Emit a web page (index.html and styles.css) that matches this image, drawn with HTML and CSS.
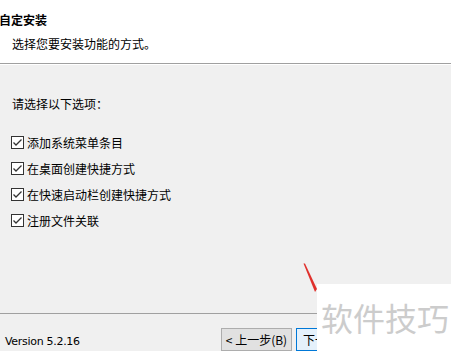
FILE: index.html
```html
<!DOCTYPE html>
<html lang="zh-CN">
<head>
  <meta charset="UTF-8">
  <title>自定安装</title>
  <link rel="stylesheet" href="styles.css">
</head>
<body>

  <div id="wizard">
    <div class="header">
      <div class="title">自定安装</div>
      <div class="subtitle">选择您要安装功能的方式。</div>
    </div>

    <div class="content">
      <div class="prompt">请选择以下选项：</div>
      <div class="options">
        <label class="option"><span class="box"><svg width="13" height="13" viewBox="0 0 13 13"><rect x="0.5" y="0.5" width="12" height="12" fill="#fff" stroke="#333"/><polyline points="2.5,6.5 5,9 10.5,3.5" fill="none" stroke="#333" stroke-width="1.3"/></svg></span>添加系统菜单条目</label>
        <label class="option"><span class="box"><svg width="13" height="13" viewBox="0 0 13 13"><rect x="0.5" y="0.5" width="12" height="12" fill="#fff" stroke="#333"/><polyline points="2.5,6.5 5,9 10.5,3.5" fill="none" stroke="#333" stroke-width="1.3"/></svg></span>在桌面创建快捷方式</label>
        <label class="option"><span class="box"><svg width="13" height="13" viewBox="0 0 13 13"><rect x="0.5" y="0.5" width="12" height="12" fill="#fff" stroke="#333"/><polyline points="2.5,6.5 5,9 10.5,3.5" fill="none" stroke="#333" stroke-width="1.3"/></svg></span>在快速启动栏创建快捷方式</label>
        <label class="option"><span class="box"><svg width="13" height="13" viewBox="0 0 13 13"><rect x="0.5" y="0.5" width="12" height="12" fill="#fff" stroke="#333"/><polyline points="2.5,6.5 5,9 10.5,3.5" fill="none" stroke="#333" stroke-width="1.3"/></svg></span>注册文件关联</label>
      </div>
    </div>

    <div class="footer">
      <span class="version">Version 5.2.16</span>
      <div class="buttons">
        <button class="btn">&lt; 上一步(B)</button>
        <button class="btn default">下一步(N) &gt;</button>
      </div>
    </div>
  </div>

  <!-- red arrow stroke from the screenshot annotation -->
  <svg class="arrow" width="451" height="351" viewBox="0 0 451 351">
    <polygon points="303.5,263.5 305,263.5 317,289 315,292" fill="#e0302c"/>
  </svg>

  <div class="watermark">软件技巧</div>

</body>
</html>
```

FILE: styles.css
```css
body {
  margin: 0;
  width: 451px;
  height: 351px;
  overflow: hidden;
  font-family: "Noto Sans CJK SC", "Liberation Sans", sans-serif;
  font-size: 12px;
  color: #000;
  background: #f0f0f0;
  position: relative;
}

#wizard {
  display: flex;
  flex-direction: column;
  height: 351px;
}

.header {
  background: #fff;
  height: 65px;
  box-sizing: border-box;
  padding-top: 12px;
  border-bottom: 1px solid #a0a0a0;
}

.title {
  font-weight: bold;
  line-height: 16px;
  margin-left: -1px;
}

.subtitle {
  line-height: 16px;
  margin-top: 8px;
  padding-left: 12px;
}

.content {
  height: 254px;
  box-sizing: border-box;
  padding: 31px 0 0 11px;
  border-top: 1px solid #fff;
}

.prompt {
  line-height: 16px;
  padding-left: 1px;
}

.options {
  margin-top: 18px;
}

.option {
  display: flex;
  align-items: center;
  height: 26px;
}

.box {
  display: flex;
  margin-right: 3px;
}

.footer {
  flex: 1;
  display: flex;
  align-items: flex-start;
  border-top: 1px solid #a0a0a0;
  padding: 14px 0 0 5px;
}

.version {
  width: 216px;
  font-family: "DejaVu Sans", sans-serif;
  font-size: 11px;
  line-height: 16px;
  margin-top: 6px;
  letter-spacing: -0.3px;
}

.buttons {
  display: flex;
  gap: 4px;
}

.btn {
  width: 71px;
  height: 23px;
  padding: 0;
  font-family: "Noto Sans CJK SC", "Liberation Sans", sans-serif;
  font-size: 12px;
  background: #e1e1e1;
  border: 1px solid #adadad;
  color: #000;
}

.btn.default {
  border-color: #0078d7;
  background: #e5f1fb;
  text-align: left;
  padding-left: 6px;
}

.arrow {
  position: absolute;
  left: 0;
  top: 0;
}

.watermark {
  position: absolute;
  left: 317px;
  top: 284px;
  right: 0;
  bottom: 0;
  background: #fff;
  color: #cccccc;
  font-size: 32px;
  line-height: 67px;
  padding-left: 4px;
}
```
